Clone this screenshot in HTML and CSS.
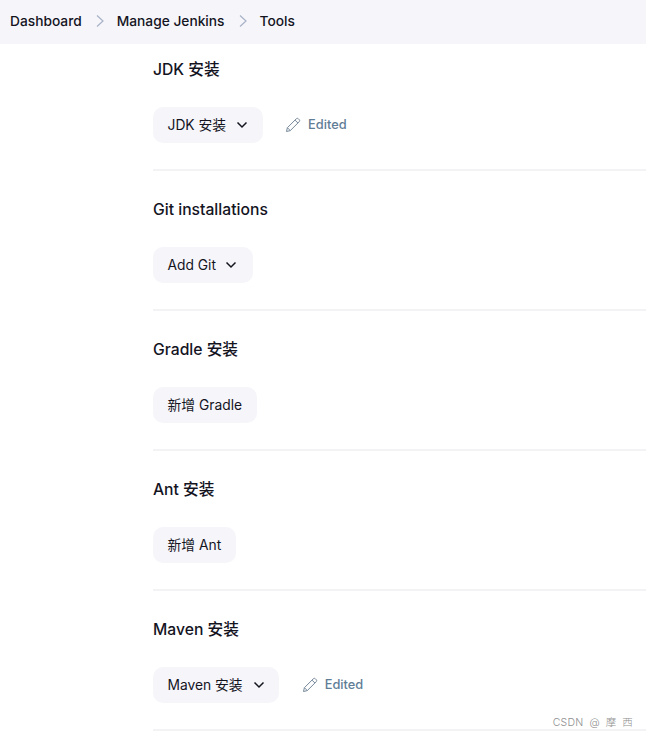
FILE: index.html
```html
<!DOCTYPE html>
<html lang="zh-CN">
<head>
    <meta charset="UTF-8">
    <title>Tools - Jenkins</title>
    <link rel="stylesheet" href="styles.css">
</head>
<body>

<header class="breadcrumbs">
    <a href="#">Dashboard</a>
    <svg class="crumb-arrow" viewBox="0 0 10 14"><path d="M2 1.5 8 7l-6 5.5"/></svg>
    <a href="#">Manage Jenkins</a>
    <svg class="crumb-arrow" viewBox="0 0 10 14"><path d="M2 1.5 8 7l-6 5.5"/></svg>
    <a href="#">Tools</a>
</header>

<main class="content">
    <section class="tool">
        <h2>JDK 安装</h2>
        <div class="tool-row">
            <button class="btn">JDK 安装
                <svg class="chevron" viewBox="0 0 12 8"><path d="M1.5 1.5 6 6l4.5-4.5"/></svg>
            </button>
            <span class="edited">
                <svg class="pencil" viewBox="0 0 16 16"><path d="M1.5 14.5l.9-3.8L11.3 1.8a1.5 1.5 0 0 1 2.1 0l.8.8a1.5 1.5 0 0 1 0 2.1l-8.9 8.9zM2.4 10.7l2.9 2.9M10 3.1l2.9 2.9"/></svg>
                Edited
            </span>
        </div>
    </section>

    <section class="tool">
        <h2>Git installations</h2>
        <div class="tool-row">
            <button class="btn btn-latin">Add Git
                <svg class="chevron" viewBox="0 0 12 8"><path d="M1.5 1.5 6 6l4.5-4.5"/></svg>
            </button>
        </div>
    </section>

    <section class="tool">
        <h2>Gradle 安装</h2>
        <div class="tool-row">
            <button class="btn">新增 Gradle</button>
        </div>
    </section>

    <section class="tool">
        <h2>Ant 安装</h2>
        <div class="tool-row">
            <button class="btn">新增 Ant</button>
        </div>
    </section>

    <section class="tool">
        <h2>Maven 安装</h2>
        <div class="tool-row">
            <button class="btn">Maven 安装
                <svg class="chevron" viewBox="0 0 12 8"><path d="M1.5 1.5 6 6l4.5-4.5"/></svg>
            </button>
            <span class="edited">
                <svg class="pencil" viewBox="0 0 16 16"><path d="M1.5 14.5l.9-3.8L11.3 1.8a1.5 1.5 0 0 1 2.1 0l.8.8a1.5 1.5 0 0 1 0 2.1l-8.9 8.9zM2.4 10.7l2.9 2.9M10 3.1l2.9 2.9"/></svg>
                Edited
            </span>
        </div>
    </section>
</main>

<div class="watermark">CSDN @ 摩 西</div>

</body>
</html>
```

FILE: styles.css
```css
html, body {
    height: 100%;
}

body {
    font-family: Inter, "Noto Sans CJK SC", sans-serif;
    background-color: #ffffff;
    color: #14141f;
    margin: 0;
    padding: 0;
    overflow: hidden;
    position: relative;
}

.breadcrumbs {
    position: relative;
    display: flex;
    align-items: center;
    height: 44px;
    padding: 0 0 3px 10px;
    box-sizing: border-box;
    background-color: #f6f6fa;
    font-size: 13.75px;
    font-weight: 500;
}

.breadcrumbs a {
    color: #14141f;
    text-decoration: none;
}

.crumb-arrow {
    width: 10px;
    height: 14px;
    margin: 0 12px 0 13px;
    fill: none;
    stroke: #a8b2c8;
    stroke-width: 1.2;
}

.content {
    margin: -13px 0 0 153px;
}

.tool {
    height: 140px;
    box-sizing: border-box;
    padding-top: 29px;
    border-bottom: 2px solid #f3f3f6;
}

.tool h2 {
    margin: 0;
    font-size: 15.7px;
    font-weight: 500;
    line-height: 20px;
}

.tool-row {
    display: flex;
    align-items: center;
    margin-top: 27px;
}

.btn {
    display: flex;
    align-items: center;
    height: 36px;
    padding: 0 14.5px 2px;
    background-color: #f6f6fa;
    color: #14141f;
    border: none;
    border-radius: 10px;
    font-family: inherit;
    font-size: 13.8px;
    font-weight: 400;
}

/* no CJK glyphs in the label, so the text box sits a bit higher */
.btn-latin {
    padding: 0 16px 0 14.5px;
}

.chevron {
    width: 12px;
    height: 8px;
    margin: 2px 0 0 10px;
    fill: none;
    stroke: #14141f;
    stroke-width: 1.5;
}

.btn-latin .chevron {
    margin: 0 0 0 9px;
}

.edited {
    display: flex;
    align-items: center;
    margin: 0 0 1px 22.5px;
    color: #5f7d96;
    font-size: 12.8px;
    font-weight: 500;
}

.pencil {
    width: 16px;
    height: 16px;
    margin-right: 7px;
    fill: none;
    stroke: #76889a;
    stroke-width: 1;
}

.watermark {
    position: absolute;
    right: 13px;
    top: 714px;
    font-size: 10.5px;
    font-weight: 300;
    letter-spacing: 0.3px;
    word-spacing: 2.5px;
    color: #8f8f8f;
}
```
